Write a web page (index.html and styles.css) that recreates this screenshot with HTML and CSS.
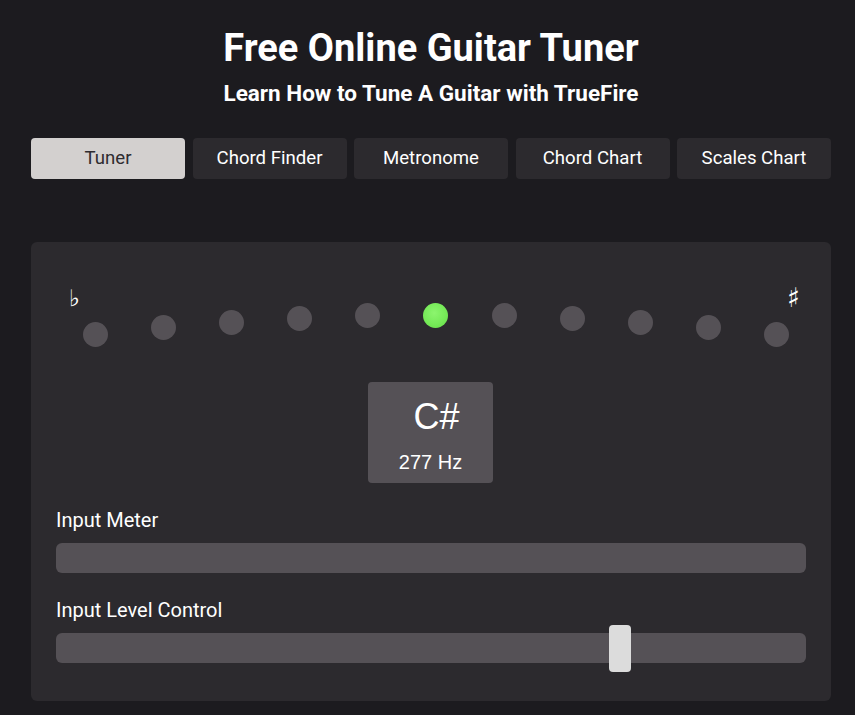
FILE: index.html
```html
<!DOCTYPE html>
<html lang="en">
<head>
<meta charset="utf-8">
<title>Free Online Guitar Tuner</title>
<link rel="stylesheet" href="styles.css">
</head>
<body>
<div class="page">
  <header class="header">
    <h1 class="title">Free Online Guitar Tuner</h1>
    <h2 class="subtitle">Learn How to Tune A Guitar with TrueFire</h2>
  </header>
  <nav class="tabs">
    <button class="tab tab-active">Tuner</button>
    <button class="tab">Chord Finder</button>
    <button class="tab">Metronome</button>
    <button class="tab">Chord Chart</button>
    <button class="tab">Scales Chart</button>
  </nav>
  <section class="card">
    <div class="symbols">
      <span class="symbol symbol-flat">♭</span>
      <span class="symbol symbol-sharp">♯</span>
    </div>
    <div class="dots">
      <span class="dot" style="margin-top:19px"></span>
      <span class="dot" style="margin-top:12px"></span>
      <span class="dot" style="margin-top:7px"></span>
      <span class="dot" style="margin-top:3px"></span>
      <span class="dot" style="margin-top:0px"></span>
      <span class="dot dot-active" style="margin-top:0px"></span>
      <span class="dot" style="margin-top:0px"></span>
      <span class="dot" style="margin-top:3px"></span>
      <span class="dot" style="margin-top:7px"></span>
      <span class="dot" style="margin-top:12px"></span>
      <span class="dot" style="margin-top:19px"></span>
    </div>
    <div class="note-box">
      <div class="note-name">C#</div>
      <div class="note-freq">277 Hz</div>
    </div>
    <div class="field">
      <div class="field-label">Input Meter</div>
      <div class="bar"></div>
    </div>
    <div class="field">
      <div class="field-label">Input Level Control</div>
      <div class="bar slider">
        <span class="thumb" style="left:553px"></span>
      </div>
    </div>
  </section>
</div>
</body>
</html>
```
FILE: styles.css
```css
* { box-sizing: border-box; }
html, body { margin: 0; padding: 0; }
body {
  background: #1c1b1f;
  color: #ffffff;
  font-family: Roboto, "Liberation Sans", sans-serif;
}
.page {
  width: 800px;
  margin-left: 31px;
  padding-top: 26px;
}
.header { text-align: center; }
.title {
  margin: 0;
  font-size: 38px;
  line-height: 44px;
  font-weight: 700;
}
.subtitle {
  margin: 10.3px 0 0;
  font-size: 22.5px;
  line-height: 26px;
  font-weight: 700;
}
.tabs {
  display: grid;
  grid-template-columns: repeat(5, 1fr);
  column-gap: 7.5px;
  margin-top: 31.7px;
}
.tab {
  height: 41px;
  border: 0;
  border-radius: 4px;
  background: #2c2a2e;
  color: #ffffff;
  font-family: Roboto, "Liberation Sans", sans-serif;
  font-size: 18.6px;
  padding: 0;
}
.tab-active {
  background: #d3d0cf;
  color: #2e2c30;
}
.card {
  margin-top: 63px;
  background: #2c2a2e;
  border-radius: 6px;
  padding: 46px 25px 38px;
}
.symbols {
  display: flex;
  justify-content: space-between;
  align-items: flex-start;
  height: 15.5px;
  padding: 0 6px 0 13px;
}
.symbol {
  font-family: "DejaVu Sans", sans-serif;
  color: #ffffff;
}
.symbol-flat {
  font-size: 23px;
  line-height: 20px;
}
.symbol-sharp {
  font-size: 27px;
  line-height: 20px;
}
.dots {
  display: flex;
  justify-content: space-between;
  align-items: flex-start;
  margin: 0 16.5px 0 26.5px;
}
.dot {
  width: 25px;
  height: 25px;
  border-radius: 50%;
  background: #555156;
}
.dot-active {
  background: radial-gradient(circle at 45% 40%, #8cf56e 0%, #76ea58 55%, #62db45 100%);
}
.note-box {
  width: 125px;
  height: 101px;
  margin: 34.5px 0 0 312px;
  background: #555156;
  border-radius: 4px;
  font-family: "Liberation Sans", Arial, sans-serif;
  text-align: center;
  padding-top: 15.5px;
}
.note-name {
  font-size: 36px;
  line-height: 40px;
  padding-left: 12px;
}
.note-freq {
  margin-top: 12.5px;
  font-size: 20px;
  line-height: 24px;
}
.field { margin-top: 25.5px; }
.field-label {
  font-size: 20px;
  line-height: 24px;
  margin-bottom: 10.5px;
}
.bar {
  height: 30px;
  border-radius: 6px;
  background: #555156;
}
.slider { position: relative; }
.thumb {
  position: absolute;
  top: -8px;
  width: 22px;
  height: 47px;
  border-radius: 4px;
  background: #dcdcdc;
}
```
